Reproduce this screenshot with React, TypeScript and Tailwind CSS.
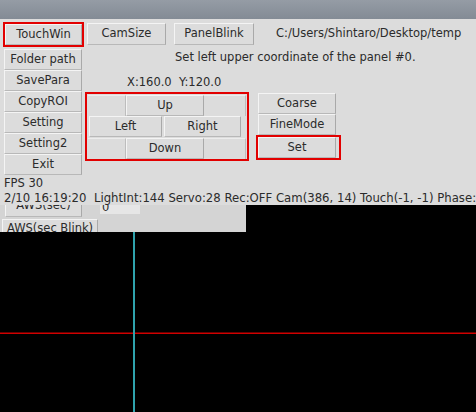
import React from 'react';

const font = { fontFamily: '"DejaVu Sans", "Liberation Sans", sans-serif' };

const Btn: React.FC<{ label: string; className?: string }> = ({ label, className = '' }) => (
  <div
    className={`flex items-center justify-center bg-[#dcdcdc] border-t border-l border-t-[#f4f4f4] border-l-[#f4f4f4] border-r border-b border-r-[#a9a9a9] border-b-[#b8b8b8] text-[11.5px] text-[#2b2b2b] leading-none whitespace-nowrap ${className}`}
  >
    {label}
  </div>
);

const Cell: React.FC<{ className?: string }> = ({ className = '' }) => (
  <div className={`border-t border-t-[#ececec] border-r border-r-[#bdbdbd] ${className}`} />
);

export default function App() {
  return (
    <div className="w-[476px] h-[412px] bg-black overflow-hidden flex flex-col" style={font}>
      {/* title bar */}
      <div className="h-[19px] shrink-0 bg-gradient-to-b from-[#959ca5] to-[#838b95]" />

      {/* main panel */}
      <div className="h-[186px] shrink-0 bg-[#dcdcdc] flex flex-col">
        <div className="flex">
          {/* left column */}
          <div className="w-[85px] shrink-0 flex flex-col pl-[3px] pt-[3px]">
            <div className="w-[81px] h-[25px] border-2 border-[#e20000] flex items-center">
              <Btn label="TouchWin" className="w-[77px] h-[21px]" />
            </div>
            <div className="flex flex-col pl-[1px] pt-[2px]">
              <Btn label="Folder path" className="w-[78px] h-[21px]" />
              <Btn label="SavePara" className="w-[78px] h-[21px]" />
              <Btn label="CopyROI" className="w-[78px] h-[21px]" />
              <Btn label="Setting" className="w-[78px] h-[21px]" />
              <Btn label="Setting2" className="w-[78px] h-[21px]" />
              <Btn label="Exit" className="w-[78px] h-[21px]" />
            </div>
          </div>

          {/* middle area */}
          <div className="flex flex-col">
            <div className="flex items-center mt-[4px] h-[22px]">
              <Btn label="CamSize" className="ml-[2px] w-[79px] h-[22px]" />
              <Btn label="PanelBlink" className="ml-[8px] w-[80px] h-[22px]" />
              <span className="ml-[22px] text-[11.5px] text-[#2b2b2b] whitespace-nowrap">
                C:/Users/Shintaro/Desktop/temp
              </span>
            </div>
            <div className="ml-[90px] mt-[5px] h-[14px] text-[11.5px] text-[#2b2b2b] whitespace-nowrap leading-[14px]">
              Set left upper coordinate of the panel #0.
            </div>
            <div className="ml-[42px] mt-[11px] h-[14px] text-[11.5px] text-[#2b2b2b] whitespace-nowrap leading-[14px]">
              X:160.0&nbsp;&nbsp;Y:120.0
            </div>
            <div className="flex mt-[3px]">
              {/* direction pad */}
              <div className="w-[164px] h-[69px] border-2 border-[#e20000] flex flex-col px-[1px] pt-[1px]">
                <div className="flex h-[21px]">
                  <Cell className="w-[38px]" />
                  <Btn label="Up" className="w-[78px] h-[21px]" />
                  <Cell className="w-[42px]" />
                </div>
                <div className="flex h-[22px]">
                  <Btn label="Left" className="ml-[1px] w-[73px] h-[21px]" />
                  <Btn label="Right" className="ml-[2px] w-[77px] h-[21px]" />
                </div>
                <div className="flex h-[21px]">
                  <Cell className="w-[38px]" />
                  <Btn label="Down" className="w-[78px] h-[21px]" />
                  <Cell className="w-[42px]" />
                </div>
              </div>
              {/* mode buttons */}
              <div className="flex flex-col ml-[7px] pt-[1px]">
                <Btn label="Coarse" className="ml-[2px] w-[78px] h-[21px]" />
                <Btn label="FineMode" className="ml-[2px] w-[78px] h-[21px]" />
                <div className="w-[85px] h-[25px] border-2 border-[#e20000] flex items-center">
                  <Btn label="Set" className="w-[78px] h-[21px]" />
                </div>
              </div>
            </div>
          </div>
        </div>

        {/* status */}
        <div className="pl-[4px] mt-[1px] text-[11.5px] text-[#2b2b2b] leading-[15px] whitespace-nowrap">
          <div>FPS 30</div>
          <div className="text-[11.7px]">2/10 16:19:20&nbsp;&nbsp;LightInt:144 Servo:28 Rec:OFF Cam(386, 14) Touch(-1, -1) Phase:</div>
        </div>
      </div>

      {/* background window, mostly hidden behind the panel */}
      <div className="h-[27px] w-[246px] shrink-0 bg-[#d4d4d4] overflow-hidden flex flex-col">
        <div className="flex items-start -mt-[10px]">
          <Btn label="AWS(sec)" className="ml-[5px] w-[77px] h-[22px]" />
          <div className="ml-[18px] mt-[10px] w-[40px] h-[9px] bg-[#e6e6e6] text-[11.5px] text-[#2b2b2b] leading-[4px] pl-[2px] overflow-hidden">
            0
          </div>
        </div>
        <Btn label="AWS(sec Blink)" className="ml-[2px] mt-[2px] w-[96px] h-[21px] items-start pt-[3px]" />
      </div>

      {/* camera canvas */}
      <svg width="476" height="180" className="block shrink-0">
        <rect width="476" height="180" fill="#000" />
        <rect x="0" y="100.5" width="476" height="1.5" fill="#d00000" />
        <rect x="133" y="0" width="2" height="180" fill="#2fa3ad" />
      </svg>
    </div>
  );
}
